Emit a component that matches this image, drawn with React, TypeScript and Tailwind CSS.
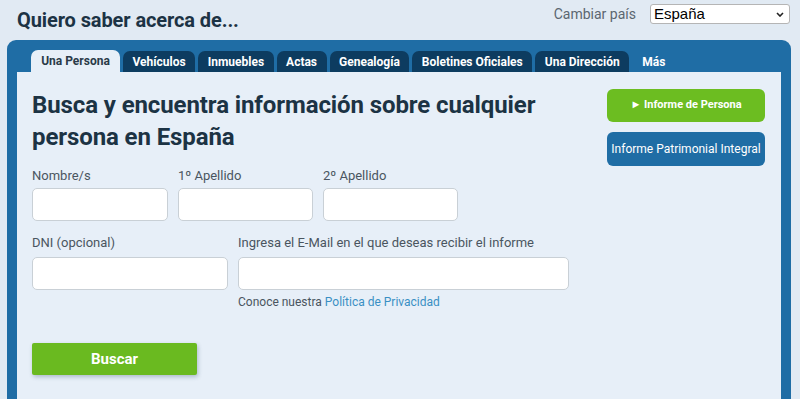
const tabs = ['Vehículos', 'Inmuebles', 'Actas', 'Genealogía', 'Boletines Oficiales', 'Una Dirección'];

const Field = ({ label, width }: { label: string; width: string }) => (
    <div className="flex flex-col">
        <label className="text-[13px] leading-[16px] text-[#4a5560] mb-[4px]">{label}</label>
        <input className={`${width} h-[33px] bg-white border border-[#c9d0d6] rounded-[5px] outline-none`} />
    </div>
);

const App = () => {
    return (
        <div className="w-[800px] h-[399px] overflow-hidden bg-[#e1eaf3] font-['Roboto',sans-serif] text-[#1c3344]">

            {/* Header */}
            <header className="h-[40px] flex items-center justify-between pl-[17px] pr-[10px]">
                <h2 className="text-[20px] font-bold tracking-[-0.1px] pb-[1px]">Quiero saber acerca de...</h2>
                <div className="flex items-center pb-[12px]">
                    <span className="text-[14px] text-[#5b6670] mr-[14px]">Cambiar país</span>
                    <div className="relative w-[140px] h-[20px] bg-white border border-[#b5b5b5] rounded-[3px] flex items-center pl-[3px] font-['Liberation_Sans',sans-serif] text-[15px] text-black">
                        España
                        <svg className="absolute right-[5px] top-[7px]" width="8" height="5" viewBox="0 0 8 5">
                            <path d="M1 1 L4 4 L7 1" fill="none" stroke="#222" strokeWidth="1.6" />
                        </svg>
                    </div>
                </div>
            </header>

            {/* Panel */}
            <div className="ml-[7px] mr-[9px] bg-[#1f6da5] rounded-t-[9px] pt-[10px] px-[10px]">

                {/* Tabs */}
                <div className="flex items-end gap-[3px] pl-[14px] h-[22px]">
                    <div className="h-[22px] w-[89px] flex items-center justify-center rounded-t-[7px] bg-[#e7eff8] text-[12px] font-bold text-[#2a3a48]">
                        Una Persona
                    </div>
                    {tabs.map((t) => (
                        <div key={t} className="h-[21px] px-[9.5px] flex items-center rounded-t-[7px] bg-[#0d3c60] text-[12px] font-bold text-white">
                            {t}
                        </div>
                    ))}
                    <div className="h-[21px] px-[10px] flex items-center text-[12px] font-bold text-white">Más</div>
                </div>

                {/* Card */}
                <div className="bg-[#e7eff8] h-[330px] px-[15px] pt-[17px] flex justify-between">
                    <div className="flex flex-col">
                        <h1 className="text-[24px] font-bold leading-[32px] w-[540px] tracking-[-0.1px]">
                            Busca y encuentra información sobre cualquier persona en España
                        </h1>

                        <div className="flex gap-[10px] mt-[15px]">
                            <Field label="Nombre/s" width="w-[136px]" />
                            <Field label="1º Apellido" width="w-[135px]" />
                            <Field label="2º Apellido" width="w-[135px]" />
                        </div>

                        <div className="flex gap-[10px] mt-[14px]">
                            <div className="flex flex-col">
                                <label className="text-[13px] leading-[16px] text-[#4a5560] mb-[6px]">DNI (opcional)</label>
                                <input className="w-[196px] h-[33px] bg-white border border-[#c9d0d6] rounded-[5px] outline-none" />
                            </div>
                            <div className="flex flex-col">
                                <label className="text-[13px] leading-[16px] text-[#4a5560] mb-[6px]">Ingresa el E-Mail en el que deseas recibir el informe</label>
                                <input className="w-[331px] h-[33px] bg-white border border-[#c9d0d6] rounded-[5px] outline-none" />
                                <p className="text-[12px] leading-[14px] text-[#4a5560] mt-[5px]">
                                    Conoce nuestra <a className="text-[#3a8fc4]">Política de Privacidad</a>
                                </p>
                            </div>
                        </div>

                        <button className="mt-[34px] w-[165px] h-[32px] bg-[#6aba20] rounded-[2px] text-white text-[15px] font-bold shadow-[1px_2px_4px_rgba(40,70,100,0.3)]">
                            Buscar
                        </button>
                    </div>

                    <div className="flex flex-col w-[158px] mr-[1px]">
                        <button className="h-[33px] bg-[#6cbd21] rounded-[6px] text-white text-[11px] font-bold">
                            ► Informe de Persona
                        </button>
                        <button className="h-[34px] mt-[10px] bg-[#1f6da5] rounded-[6px] text-white text-[12px]">
                            Informe Patrimonial Integral
                        </button>
                    </div>
                </div>
            </div>
        </div>
    );
};

export default App;
